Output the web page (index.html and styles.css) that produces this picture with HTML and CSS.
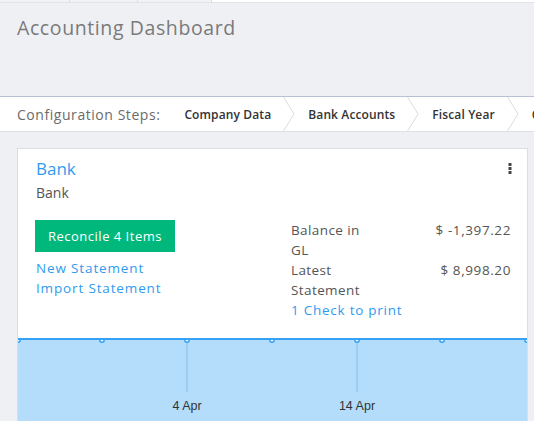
FILE: index.html
```html
<!DOCTYPE html>
<html>
<head>
<meta charset="utf-8">
<link rel="stylesheet" href="styles.css">
</head>
<body>
<div class="topbar">
  <div class="tab"></div><div class="tab"></div><div class="tab"></div><div class="tab-rest"></div>
</div>
<header class="header">
  <h1 class="title">Accounting Dashboard</h1>
</header>
<nav class="steps">
  <span class="steps-label">Configuration Steps:</span>
  <span class="step">Company Data</span>
  <svg class="chev" width="12" height="34" viewBox="0 0 12 34"><polyline points="0.5,0 11,17 0.5,34" fill="none" stroke="#dcdcdc" stroke-width="1"/></svg>
  <span class="step">Bank Accounts</span>
  <svg class="chev" width="12" height="34" viewBox="0 0 12 34"><polyline points="0.5,0 11,17 0.5,34" fill="none" stroke="#dcdcdc" stroke-width="1"/></svg>
  <span class="step">Fiscal Year</span>
  <svg class="chev" width="12" height="34" viewBox="0 0 12 34"><polyline points="0.5,0 11,17 0.5,34" fill="none" stroke="#dcdcdc" stroke-width="1"/></svg>
  <span class="step">Chart of Accounts</span>
</nav>
<main class="content">
  <section class="card">
    <div class="card-head">
      <div>
        <div class="card-title">Bank</div>
        <div class="card-sub">Bank</div>
      </div>
      <svg class="kebab" width="4" height="12" viewBox="0 0 4 12"><rect x="0.5" y="0" width="3" height="3" fill="#444"/><rect x="0.5" y="4" width="3" height="3" fill="#444"/><rect x="0.5" y="8" width="3" height="3" fill="#444"/></svg>
    </div>
    <div class="card-body">
      <div class="left">
        <button class="btn">Reconcile 4 Items</button>
        <a class="link">New Statement</a>
        <a class="link">Import Statement</a>
      </div>
      <div class="right">
        <div class="stat"><span class="stat-label">Balance in GL</span><span class="stat-val">$ -1,397.22</span></div>
        <div class="stat"><span class="stat-label">Latest Statement</span><span class="stat-val">$ 8,998.20</span></div>
        <a class="link">1 Check to print</a>
      </div>
    </div>
    <div class="chart">
      <svg width="509" height="90" viewBox="0 0 509 90">
        <rect x="0" y="1" width="509" height="89" fill="#b3ddfb"/>
        <line x1="169" y1="1" x2="169" y2="54" stroke="#96c9ec" stroke-width="1.5"/>
        <line x1="339" y1="1" x2="339" y2="54" stroke="#96c9ec" stroke-width="1.5"/>
        <g fill="#ffffff" stroke="#36a2f5" stroke-width="1.5">
          <circle cx="0" cy="2" r="2.2"/>
          <circle cx="84" cy="2" r="2.2"/>
          <circle cx="169" cy="2" r="2.2"/>
          <circle cx="254" cy="2" r="2.2"/>
          <circle cx="339" cy="2" r="2.2"/>
          <circle cx="424" cy="2" r="2.2"/>
          <circle cx="509" cy="2" r="2.2"/>
        </g>
        <rect x="0" y="-3" width="509" height="3" fill="#ffffff"/>
        <line x1="0" y1="1" x2="509" y2="1" stroke="#36a2f5" stroke-width="2"/>
        <text x="169" y="72" text-anchor="middle" class="axis">4 Apr</text>
        <text x="339" y="72" text-anchor="middle" class="axis">14 Apr</text>
      </svg>
    </div>
  </section>
</main>
</body>
</html>
```
FILE: styles.css
```css
* { box-sizing: border-box; }
html, body { margin: 0; padding: 0; }
body {
  font-family: "Open Sans", "DejaVu Sans", sans-serif;
  background: #eff0f4;
  width: 534px;
  height: 421px;
  overflow: hidden;
}
.topbar {
  display: flex;
  height: 3px;
  border-bottom: 1px solid #e3e4e8;
}
.tab {
  width: 70px;
  background: #f2f2f4;
  border-right: 1px solid #dcdcde;
}
.tab:nth-child(2) { width: 68px; }
.tab:nth-child(3) { width: 74px; }
.tab-rest { flex: 1; background: #ffffff; }
.header {
  height: 94px;
  background: #eff0f4;
  border-bottom: 1px solid #b6c2d2;
  padding: 13px 0 0 17px;
}
.title {
  margin: 0;
  font-size: 19.5px;
  font-weight: 400;
  line-height: 24px;
  color: #7a7a7a;
  letter-spacing: 0.6px;
}
.steps {
  display: flex;
  align-items: center;
  height: 35px;
  background: #ffffff;
  border-bottom: 1px solid #dfe1e6;
  padding-left: 17px;
  white-space: nowrap;
  overflow: hidden;
}
.steps-label {
  font-size: 14px;
  color: #6b6b6b;
  margin-right: 24px;
  letter-spacing: 0.55px;
}
.step {
  font-size: 12px;
  font-weight: 600;
  color: #333333;
  letter-spacing: 0.12px;
}
.chev {
  display: block;
  margin: 0 13px 0 12px;
  flex: none;
}
.content {
  padding: 16px 6px 0 17px;
}
.card {
  background: #ffffff;
  border: 1px solid #dcdde2;
}
.card-head {
  display: flex;
  justify-content: space-between;
  padding: 9px 15px 0 18px;
}
.card-title {
  font-size: 17px;
  line-height: 22px;
  color: #2f9bf0;
}
.card-sub {
  font-size: 14px;
  line-height: 20px;
  margin-top: 3px;
  color: #555555;
}
.kebab {
  margin-top: 5px;
}
.card-body {
  display: grid;
  grid-template-columns: 256px 1fr;
  padding: 0 16px 0 17px;
  margin-top: 17px;
}
.left {
  display: flex;
  flex-direction: column;
  align-items: flex-start;
}
.btn {
  font-family: inherit;
  font-size: 13px;
  color: #ffffff;
  background: #00b77c;
  border: none;
  height: 32px;
  padding: 0 13px;
  margin-bottom: 6px;
  letter-spacing: 0.5px;
}
.link {
  display: block;
  font-size: 13.5px;
  line-height: 20px;
  color: #2f9bf0;
  letter-spacing: 0.85px;
  margin-left: 1px;
}
.right {
  display: flex;
  flex-direction: column;
}
.right .link { letter-spacing: 0.75px; margin-left: 0; }
.stat {
  display: flex;
  justify-content: space-between;
  font-size: 13.5px;
  line-height: 20px;
  color: #555555;
  letter-spacing: 0.4px;
}
.stat-label { width: 84px; }
.stat-val { letter-spacing: 0.6px; }
.chart {
  margin-top: 18px;
  height: 90px;
  overflow: hidden;
}
.chart svg { display: block; }
.axis {
  font-family: "Liberation Sans", Arial, sans-serif;
  font-size: 12.5px;
  fill: #333333;
}
```
